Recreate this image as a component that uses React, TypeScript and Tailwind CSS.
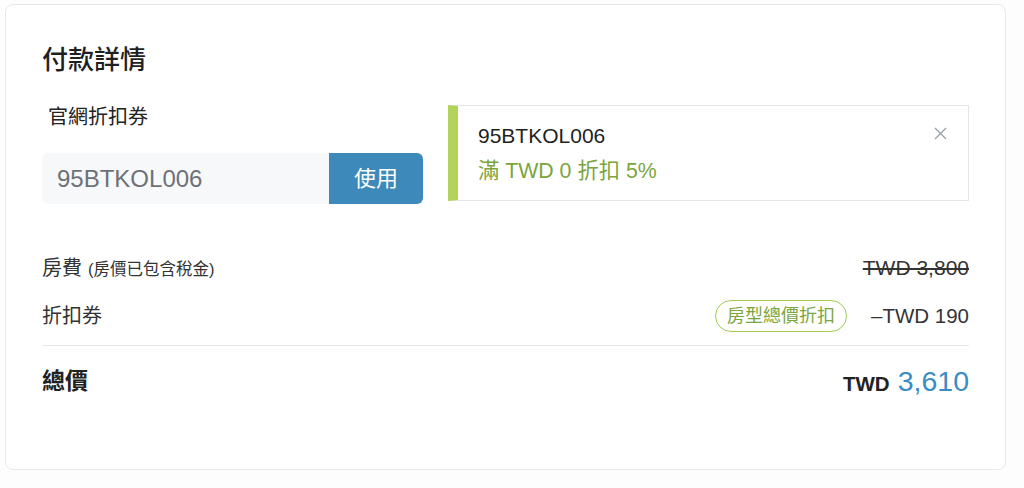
import React from "react";

const font = { fontFamily: '"Liberation Sans", "Noto Sans CJK TC", sans-serif' };

export default function App() {
  return (
    <div className="w-[1024px] h-[488px] bg-[#fdfdfd] pt-[4px] pl-[5px]" style={font}>
      <div className="w-[1001px] h-[466px] rounded-[8px] border border-[#e6e8eb] bg-white px-9 pt-[39px] text-[#333]">
        <div className="h-8 leading-8 text-[26px] font-medium text-[#1f1f1f]">付款詳情</div>

        <div className="mt-[29px] flex">
          <div className="w-[381px]">
            <div className="h-6 leading-6 pl-[6px] text-[20px] text-[#222]">官網折扣券</div>
            <div className="mt-[24px] h-[51px] flex rounded-[6px] overflow-hidden">
              <div className="flex-1 bg-[#f7f8fa] pl-[15px] flex items-center text-[24px] text-[#6d7177]">95BTKOL006</div>
              <button className="w-[94px] bg-[#3d89ba] text-white text-[22px] flex items-center justify-center">使用</button>
            </div>
          </div>

          <div className="relative ml-[25px] flex-1 h-[96px] border border-[#e3e7ec] border-l-[10px] border-l-[#b3d45a] pl-5 pt-[18px]">
            <div className="h-6 leading-6 text-[21px] text-[#1f1f1f]">95BTKOL006</div>
            <div className="mt-[11px] h-6 leading-6 text-[21.3px] text-[#7ba53d]">滿 TWD 0 折扣 5%</div>
            <svg className="absolute right-[21px] top-[21px]" width="13" height="13" viewBox="0 0 13 13" fill="none" stroke="#9aa0a6" strokeWidth="1.3">
              <path d="M1 1 L12 12 M12 1 L1 12" />
            </svg>
          </div>
        </div>

        <div className="mt-[40px] h-[48px] flex items-center justify-between">
          <div className="flex items-baseline">
            <span className="text-[20px]">房費</span>
            <span className="ml-[6px] text-[16.5px]">(房價已包含稅金)</span>
          </div>
          <span className="text-[21px] line-through">TWD 3,800</span>
        </div>

        <div className="h-[48px] flex items-center justify-between">
          <span className="text-[20px]">折扣券</span>
          <div className="flex items-center">
            <span className="mr-[24px] h-[32px] px-[11px] rounded-full border-[1.5px] border-[#a3cc55] text-[18px] text-[#7ba53d] flex items-center">房型總價折扣</span>
            <span className="text-[20.5px]">–TWD 190</span>
          </div>
        </div>

        <div className="mt-[5px] h-px bg-[#e6e8eb]" />

        <div className="h-[70px] flex items-center justify-between">
          <span className="text-[23px] font-bold text-[#222]">總價</span>
          <div className="flex items-baseline">
            <span className="text-[20.5px] font-semibold text-[#222]">TWD</span>
            <span className="ml-[8px] text-[28.5px] text-[#3a8cc4]">3,610</span>
          </div>
        </div>
      </div>
    </div>
  );
}
